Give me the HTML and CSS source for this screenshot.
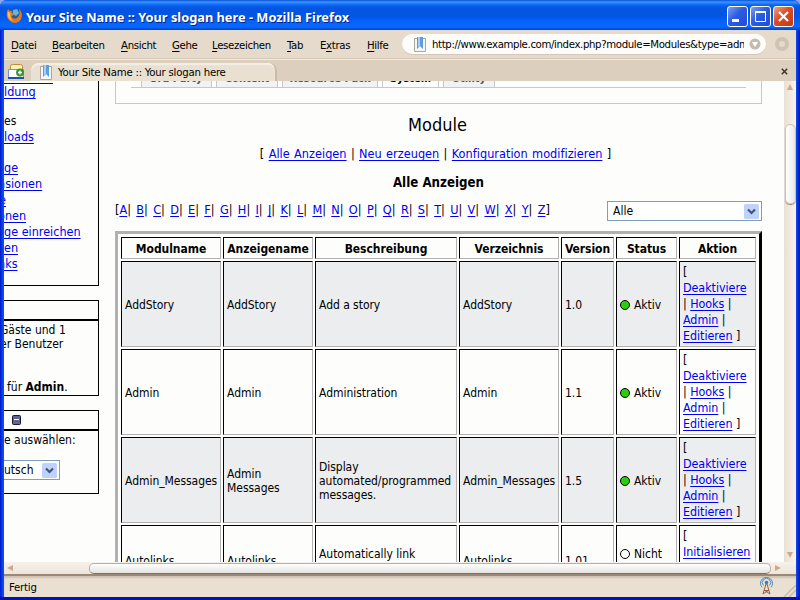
FILE: index.html
```
<!DOCTYPE html>
<html lang="de">
<head>
<meta charset="utf-8">
<title>Your Site Name :: Your slogan here</title>
<link rel="stylesheet" href="styles.css">
</head>
<body>
<div class="window">
  <header class="titlebar">
    <svg class="fox" width="17" height="17" viewBox="0 0 17 17"><circle cx="8.5" cy="8" r="6.2" fill="#245d9c"/><path d="M7 3 L11 2 L13 6 L10 9 L7 7 Z" fill="#6ab4dc"/><path d="M2 2 C0 6 0 11 4 14 C8 17.500 14 16 15.500 11 C16.500 7 15.500 4 13 2 C14 5 14 9 11 11 C8 12.500 5.500 11 5.500 9 L8 8 L8 6.500 L5.500 6 L6.500 4.500 C4 4 3 3.500 2 2 Z" fill="#e8781c"/><path d="M2 5 C1 9 3 13 7 14 C4 11 4 8 4.500 6 Z" fill="#ffc04a"/></svg>
    <h1 class="caption">Your Site Name :: Your slogan here - Mozilla Firefox</h1>
    <div class="buttons">
      <span class="wbtn"><svg width="19" height="19"><rect x="4" y="12" width="7" height="3" fill="#fff"/></svg></span>
      <span class="wbtn"><svg width="19" height="19"><path d="M4.500 4.500h10v10h-10z M4 5.500h11" fill="none" stroke="#fff"/><path d="M4 5h11" stroke="#fff" stroke-width="2"/></svg></span>
      <span class="wbtn close"><svg width="19" height="19"><path d="M5 5l9 9M14 5l-9 9" stroke="#fff" stroke-width="2.200"/></svg></span>
    </div>
  </header>

  <nav class="menubar">
    <span class="mi m1"><u>D</u>atei</span><span class="mi m2"><u>B</u>earbeiten</span><span class="mi m3"><u>A</u>nsicht</span><span class="mi m4"><u>G</u>ehe</span><span class="mi m5"><u>L</u>esezeichen</span><span class="mi m6"><u>T</u>ab</span><span class="mi m7">E<u>x</u>tras</span><span class="mi m8"><u>H</u>ilfe</span>
    <div class="address">
      <svg width="12" height="15"><path d="M.5 1.500h11v13H.5z" fill="#f6f6f4" stroke="#a9a59f"/><path d="M3 0h6v12l-3-3-3 3z" fill="#5b9fe0"/><path d="M4 0h2v9l-2 1z" fill="#a5d0f5"/></svg>
      <span class="url">http://www.example.com/index.php?module=Modules&amp;type=admin</span>
      <svg width="12" height="12"><circle cx="6" cy="6" r="5.500" fill="#c6bbad"/><path d="M3 4h6l-3 5z" fill="#fff"/></svg>
    </div>
    <span class="throbber"></span>
  </nav>

  <div class="tabbar">
    <svg width="17" height="17"><path d="M2.500 6V3.500q0-2 2-2h8q2 0 2 2V6" fill="#fff3c0" stroke="#c78b35"/><path d="M.5 6.500h15v8H.5z" fill="#f8fbff" stroke="#6f93d4"/><path d="M0 15h16" stroke="#2450a4" stroke-width="2"/><circle cx="12" cy="9.500" r="3.900" fill="#2d982d"/><path d="M10 9.500h4M12 7.500v4" stroke="#fff" stroke-width="1.300"/></svg>
    <div class="tab">
      <svg width="12" height="15"><path d="M.5 1.500h11v13H.5z" fill="#f6f6f4" stroke="#a9a59f"/><path d="M3 0h6v12l-3-3-3 3z" fill="#5b9fe0"/><path d="M4 0h2v9l-2 1z" fill="#a5d0f5"/></svg>
      <span>Your Site Name :: Your slogan here</span>
    </div>
    <svg class="tabclose" width="7" height="7"><path d="M.8.8l5.400 5.400M6.200.8L.8 6.200" stroke="#3b342c" stroke-width="1.500"/></svg>
  </div>

  <div class="view">
    <div class="page">
      <aside class="side">
        <section class="box links">
          <i class="cut"></i>
          <a class="l1">ldung</a>
          <span class="l2">es</span>
          <a>loads</a>
          <a class="l3">ge</a>
          <a class="in">nsionen</a>
          <a class="in2">e</a>
          <a class="in">onen</a>
          <a>ge einreichen</a>
          <a>en</a>
          <a class="in">nks</a>
        </section>
        <section class="box online">
          <h2></h2>
          <p class="in3">Gäste und 1</p>
          <p class="in3">er Benutzer</p>
          <p class="for">für <b>Admin</b>.</p>
        </section>
        <section class="box lang">
          <h2><svg width="9" height="10"><rect x=".5" y=".5" width="8" height="9" rx="1" fill="#64648e" stroke="#181830"/><path d="M2 4.500h5" stroke="#fff"/></svg></h2>
          <p>e auswählen:</p>
          <div class="select small"><span>utsch</span><svg width="15" height="15"><rect width="15" height="15" rx="1.500" fill="#bfd2fb"/><path d="M4 5.500l3.500 3.500L11 5.500" fill="none" stroke="#42557e" stroke-width="2.200"/></svg></div>
        </section>
      </aside>

      <main class="main">
        <div class="strip">
          <div class="tabs">
            <span class="pt t1">3rd Party</span><span class="pt t2">Content</span><span class="pt t3">Resource Pack</span><span class="pt t4">System</span><span class="pt t5">Utility</span>
          </div>
        </div>
        <h2 class="title">Module</h2>
        <p class="sub">[ <a>Alle Anzeigen</a> | <a>Neu erzeugen</a> | <a>Konfiguration modifizieren</a> ]</p>
        <h3 class="heading">Alle Anzeigen</h3>
        <div class="filter">
          <div class="letters"><span>[<a>A</a>|</span><span><a>B</a>|</span><span><a>C</a>|</span><span><a>D</a>|</span><span><a>E</a>|</span><span><a>F</a>|</span><span><a>G</a>|</span><span><a>H</a>|</span><span><a>I</a>|</span><span><a>J</a>|</span><span><a>K</a>|</span><span><a>L</a>|</span><span><a>M</a>|</span><span><a>N</a>|</span><span><a>O</a>|</span><span><a>P</a>|</span><span><a>Q</a>|</span><span><a>R</a>|</span><span><a>S</a>|</span><span><a>T</a>|</span><span><a>U</a>|</span><span><a>V</a>|</span><span><a>W</a>|</span><span><a>X</a>|</span><span><a>Y</a>|</span><span><a>Z</a>]</span></div>
          <div class="select"><span>Alle</span><svg width="15" height="15"><rect width="15" height="15" rx="1.500" fill="#bfd2fb"/><path d="M4 5.500l3.500 3.500L11 5.500" fill="none" stroke="#42557e" stroke-width="2.200"/></svg></div>
        </div>
        <table class="modules">
          <colgroup><col class="c1"><col class="c2"><col class="c3"><col class="c4"><col class="c5"><col class="c6"><col class="c7"></colgroup>
          <tr class="head"><th>Modulname</th><th>Anzeigename</th><th>Beschreibung</th><th>Verzeichnis</th><th>Version</th><th>Status</th><th>Aktion</th></tr>
          <tr class="odd"><td>AddStory</td><td>AddStory</td><td>Add a story</td><td>AddStory</td><td>1.0</td><td><i class="dot"></i>Aktiv</td><td class="act">[<br><a>Deaktiviere</a><br>| <a>Hooks</a> |<br><a>Admin</a> |<br><a>Editieren</a> ]</td></tr>
          <tr><td>Admin</td><td>Admin</td><td>Administration</td><td>Admin</td><td>1.1</td><td><i class="dot"></i>Aktiv</td><td class="act">[<br><a>Deaktiviere</a><br>| <a>Hooks</a> |<br><a>Admin</a> |<br><a>Editieren</a> ]</td></tr>
          <tr class="odd"><td>Admin_Messages</td><td>Admin<br>Messages</td><td>Display<br>automated/programmed<br>messages.</td><td>Admin_Messages</td><td>1.5</td><td><i class="dot"></i>Aktiv</td><td class="act">[<br><a>Deaktiviere</a><br>| <a>Hooks</a> |<br><a>Admin</a> |<br><a>Editieren</a> ]</td></tr>
          <tr class="last"><td>Autolinks</td><td>Autolinks</td><td>Automatically link<br>&nbsp;</td><td>Autolinks</td><td>1.01</td><td><i class="dot off"></i>Nicht<br>&nbsp;</td><td class="act">[<br><a>Initialisieren</a></td></tr>
        </table>
      </main>
    </div>
    <div class="vscroll"><i class="up"></i><div class="vthumb"></div><i class="down"></i></div>
  </div>
  <div class="hscroll"><i class="left"></i><div class="hthumb"></div><i class="right"></i></div>
  <footer class="status"><span>Fertig</span>
    <svg width="40" height="20"><path d="M7 17l3-10h1l3 10M8 13.500h5M7 17l6-4M14 17l-6-4" fill="none" stroke="#9a6040"/><circle cx="10.500" cy="5.500" r="1.800" fill="#3a7ec4"/><path d="M7.500 8.500a4.200 4.200 0 1 1 6 0M6 10.300a6 6 0 1 1 9 0" fill="none" stroke="#4b8fca"/><path d="M28 20L40 8M33 20l7-7" stroke="#c9bba8" stroke-width="1.500"/></svg>
  </footer>
</div>
</body>
</html>
```
FILE: styles.css
```
* { box-sizing: border-box; }
body { margin: 0; background: #8fa5e8; font-family: "DejaVu Sans Condensed", "DejaVu Sans", sans-serif; font-stretch: condensed; font-size: 12px; color: #000; }
h1, h2, h3, p { margin: 0; font-weight: normal; }
svg { display: block; flex: none; }
.window { width: 800px; height: 600px; overflow: hidden; display: flex; flex-direction: column; padding: 0 4px 4px; border-radius: 7px 7px 0 0; background: linear-gradient(90deg, #0019c8, #0a4cf0 3px, #0855ee 4px, #0855ee 796px, #0a3ce8 797px, #0010a8); box-shadow: inset 0 -3px 0 #0014b4; }

.titlebar { height: 30px; margin: 0 -4px; padding: 3px 6px 0 6px; display: flex; align-items: center; flex: none; background: linear-gradient(#0a50d8, #3b94ff 2px, #0a66f4 5px, #0355e2 8px, #0355e2 16px, #0663fa 22px, #0568ff 27px, #0240cc); }
.fox { margin-top: -3px; }
.caption { flex: 1; margin-left: 3px; font: bold 12.800px/16px "Noto Sans", sans-serif; color: #fff; text-shadow: 1px 1px 0 #04218c; white-space: nowrap; }
.buttons { display: flex; gap: 2px; }
.wbtn { width: 21px; height: 21px; border: 1px solid #fff; border-radius: 3px; background: linear-gradient(135deg, #7e9ff5, #2a5ce0 45%, #1e4cd8); }
.wbtn.close { background: linear-gradient(135deg, #f0a285, #dc4a24 45%, #c8380f); }

.menubar { height: 29px; flex: none; display: flex; align-items: center; background: #e5dacb; padding-left: 7px; font-size: 11.300px; border-bottom: 1px solid #d5c8b5; }
u { text-underline-offset: 2px; text-decoration-thickness: 1px; }
.mi { flex: none; white-space: nowrap; letter-spacing: -.33px; line-height: 16px; margin-top: 3px; }
.m1 { width: 41px; } .m2 { width: 69px; } .m3 { width: 51px; } .m4 { width: 40px; } .m5 { width: 75px; } .m6 { width: 33px; } .m7 { width: 47px; } .m8 { width: 35px; }
.address { width: 364px; height: 20px; flex: none; display: flex; align-items: center; background: #fdfcfa; border-radius: 10px; padding: 0 6px 0 12px; box-shadow: 0 1px 0 #d3c7b7; }
.url { width: 312px; margin: 2px 5px 0 6px; overflow: hidden; white-space: nowrap; letter-spacing: -.36px; line-height: 16px; flex: none; }
.throbber { width: 14px; height: 14px; margin-left: 9px; border: 4px solid #cfc3b1; border-radius: 50%; flex: none; }

.tabbar { height: 22px; flex: none; display: flex; align-items: center; background: #dccfbd; border-top: 1px solid #f3ead9; padding: 2px 8px 0 4px; }
.tab { width: 246px; height: 18px; align-self: flex-end; margin-left: 6px; display: flex; align-items: center; gap: 6px; padding: 1px 9px 0; background: #eae0d1; border-radius: 8px 8px 0 0; border-right: 2px solid #cabba6; box-shadow: inset 0 2px 1px #f5efe5; font-size: 11.300px; letter-spacing: -.22px; white-space: nowrap; }
.tabclose { margin-left: auto; }

.view { height: 481px; flex: none; display: flex; background: #fdfefc; overflow: hidden; }
.page { width: 780px; display: flex; align-items: flex-start; }
a, .cut { color: #0000f4; }
a { text-decoration: underline 1px; text-underline-offset: 2px; text-decoration-skip-ink: none; }

.side { width: 95px; flex: none; overflow: hidden; white-space: nowrap; }
.box { border: 1px solid #000; border-left: 0; }
.links { border-top: 0; height: 205px; font-size: 12.500px; line-height: 16px; }
.links > a, .links > span { display: block; width: fit-content; }
.cut { display: block; width: 49px; height: 3px; border-bottom: 1px solid #0000f4; }
.links .l2 { margin-top: 13px; font-size: 12px; }
.links .l3 { margin-top: 15px; }
.links .in { margin-left: -6px; } .links .in2 { margin-left: -5px; }
.in3 { margin-left: -4px; }
.online { margin-top: 14px; height: 96px; line-height: 14px; }
.box h2 { height: 20px; border-bottom: 2px solid #000; padding: 4px 0 0 8px; }
.online p:nth-of-type(1) { margin-top: 2px; }
.online .for { margin: 29px 0 0 3px; }
.lang { margin-top: 14px; height: 84px; line-height: 14px; }
.lang p { margin-top: 2px; }
.select { height: 20px; flex: none; display: flex; justify-content: space-between; align-items: center; border: 1px solid #7f9db9; padding: 0 2px 0 5px; background: #fff; width: 155px; }
.select.small { width: 56px; border-left: 0; padding-left: 0; margin-top: 13px; }

.main { width: 647px; margin-left: 16px; flex: none; }
.strip { height: 23px; border: 1px solid #c8c8c8; border-top: 0; padding: 0 15px; }
.tabs { height: 7px; border-bottom: 1px solid #c8c8c8; display: flex; overflow: hidden; padding-left: 10px; }
.pt { height: 6px; background: #f1f2f3; border: 1px solid #c8c8c8; border-width: 0 1px; padding-bottom: 1px; font-weight: bold; font-size: 11px; line-height: 14px; color: #555; display: flex; align-items: flex-end; justify-content: center; white-space: nowrap; flex: none; }
.t1 { width: 71px; margin-right: 4px; } .t2 { width: 62px; margin-right: 4px; } .t3 { width: 96px; margin-right: 4px; } .t4 { width: 57px; background: #fdfefc; color: #000; height: 7px; padding-bottom: 2px; margin-right: 4px; } .t5 { width: 52px; }
.title { margin: 10px 2px 0 0; text-align: center; font-size: 18px; line-height: 22px; }
.sub { margin: 9px 6px 0 0; text-align: center; font-size: 12.600px; line-height: 18px; letter-spacing: .02px; word-spacing: .7px; white-space: nowrap; }
.heading { margin-top: 11px; text-align: center; font-weight: bold; font-size: 13.200px; line-height: 18px; }
.filter { margin-top: 9px; height: 20px; display: flex; justify-content: space-between; align-items: center; }
.letters { width: 435px; margin-top: -4px; display: flex; justify-content: space-between; font-size: 12.600px; white-space: nowrap; }

.modules { width: 647px; margin-top: 10px; table-layout: fixed; border-collapse: separate; border-spacing: 2px; padding: 1px; border: 3px solid; border-color: #b3b0b4 #000 #000 #b3b0b4; font-size: 12px; line-height: 14px; }
.c1 { width: 100px; } .c2 { width: 90px; } .c3 { width: 142px; } .c4 { width: 100px; } .c5 { width: 53px; } .c6 { width: 61px; } .c7 { width: 77px; }
th, td { border: 1px solid; border-color: #000 #b3b0b4 #b3b0b4 #000; padding: 1px 3px; text-align: left; white-space: nowrap; }
th { text-align: center; padding: 1px 0 0; height: 22px; letter-spacing: -.05px; }
td { height: 86px; padding: 2px 3px 0; letter-spacing: -.04px; }
.odd td { background: #ebedee; }
.last td { height: 70px; }
td.act { font-size: 12.400px; line-height: 16px; vertical-align: top; padding-top: 2px; }
.dot { display: inline-block; width: 10px; height: 10px; border: 1px solid #000; border-radius: 50%; background: #2fcc0c; vertical-align: -1px; margin-right: 4px; }
.dot.off { background: #fff; }

.vscroll { width: 12px; display: flex; flex-direction: column; align-items: center; background: linear-gradient(90deg, #e9dfd3, #f7f3ed); }
.vthumb { width: 11px; height: 80px; margin-top: 34px; border-radius: 5px; border: 1px solid #cfc2b5; background: linear-gradient(90deg, #fff, #e8e8e6); box-shadow: 0 1px 1px #998877; }
.up, .down, .left, .right { width: 0; height: 0; border: 3px solid transparent; }
.up { border-bottom: 6px solid #cda98b; border-top: 0; margin-top: 3px; }
.down { border-top: 6px solid #cda98b; border-bottom: 0; margin-top: auto; margin-bottom: 4px; }
.hscroll { height: 12px; flex: none; display: flex; align-items: center; background: linear-gradient(#f6f1ea, #eee5da); }
.left { border-right: 6px solid #cda98b; border-left: 0; margin-left: 3px; }
.right { border-left: 6px solid #cda98b; border-right: 0; margin-left: 4px; }
.hthumb { width: 682px; height: 11px; margin-left: 76px; border-radius: 5px; background: linear-gradient(#fff, #e4e3e0); border: 1px solid #bfae9f; border-bottom-color: #806e60; }
.status { flex: 1; display: flex; align-items: center; justify-content: space-between; padding: 1px 0 0 5px; background: #eae0d2; border-top: 2px solid #9a8878; box-shadow: inset 0 2px 2px #d0c1af; font-size: 11.300px; letter-spacing: -.2px; }
```
